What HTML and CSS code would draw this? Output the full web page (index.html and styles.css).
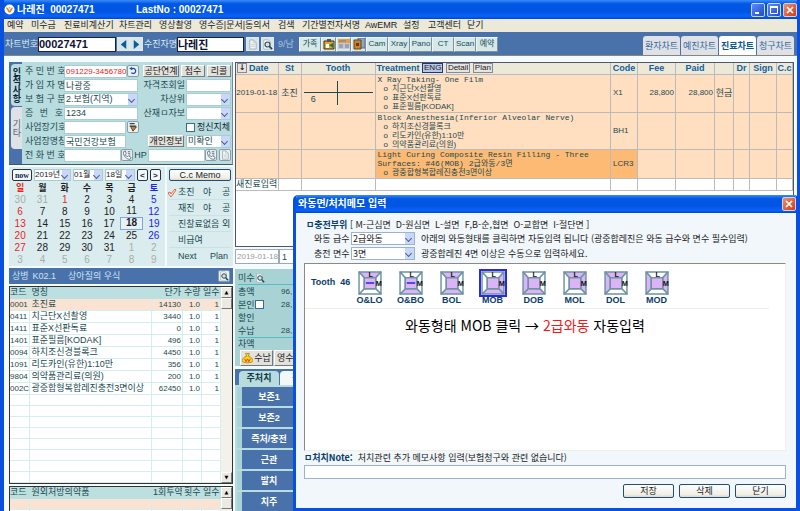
FILE: index.html
```html
<!DOCTYPE html>
<html lang="ko">
<head>
<meta charset="utf-8">
<title>나레진 00027471</title>
<link rel="stylesheet" href="styles.css">
</head>
<body>
<svg width="0" height="0" class="defs" aria-hidden="true">
  <symbol id="mag" viewBox="0 0 12 12"><path d="M2 1h5l2 2v8H2z" fill="#fff" stroke="#9aa" stroke-width=".8"/><circle cx="6" cy="6" r="2.7" fill="#cfe4ee" stroke="#29484f" stroke-width="1.2"/><path d="M8 8l3 3" stroke="#29484f" stroke-width="1.8"/></symbol>
  <symbol id="phone" viewBox="0 0 12 12"><path d="M2 2l2-1 1 3-1 1c0 2 2 3 3 3l1-1 3 2-1 2C6 12 1 7 2 2z" fill="#fff" stroke="#456" stroke-width=".9"/><path d="M7 2h3M7 4h3M8 6h2" stroke="#567"/></symbol>
  <symbol id="page" viewBox="0 0 12 12"><path d="M3 1h4l3 3v7H3z" fill="#eef3f6" stroke="#a4afb5"/><path d="M7 1v3h3M4.500 6h4M4.500 8h4" stroke="#b5bfc4" fill="none" stroke-width=".7"/></symbol>
</svg>
<div class="window">
  <header class="titlebar">
    <svg class="logo" viewBox="0 0 12 12"><circle cx="6" cy="6" r="5.500" fill="#fff"/><path d="M2.500 4.500c2 0 2 4 3.500 4s1.500-4 3.500-4" fill="none" stroke="#f08a24" stroke-width="2"/><circle cx="6" cy="4" r="1" fill="#f5b540"/></svg>
    <h1>나레진&nbsp; 00027471</h1>
    <span class="last">LastNo : 00027471</span>
    <div class="winbtns">
      <button aria-label="최소화"><svg viewBox="0 0 12 12"><path d="M3 9h4" stroke="#fff" stroke-width="2"/></svg></button>
      <button aria-label="최대화"><svg viewBox="0 0 12 12"><path d="M2.500 3v6.500h7V3z" fill="none" stroke="#fff"/><path d="M2 3h8" stroke="#fff" stroke-width="2"/></svg></button>
      <button class="x" aria-label="창 닫기"><svg viewBox="0 0 12 12"><path d="M3 3l6 6M9 3l-6 6" stroke="#fff" stroke-width="1.700"/></svg></button>
    </div>
  </header>
  <nav class="menu">
    <a href="#">예약</a><a href="#">미수금</a><a href="#">진료비계산기</a><a href="#">차트관리</a><a href="#">영상촬영</a><a href="#">영수증|문서|동의서</a><a href="#">검색</a><a href="#">기간별전자서명</a><a href="#">AwEMR</a><a href="#">설정</a><a href="#">고객센터</a><a href="#">닫기</a>
  </nav>
  <div class="toolbar">
    <label for="chart">차트번호</label><input id="chart" class="no" value="00027471">
    <button class="ic" aria-label="이전"><svg viewBox="0 0 12 12"><path d="M9 1v10L3 6z" fill="#0b5c9c"/></svg></button>
    <button class="ic" aria-label="다음"><svg viewBox="0 0 12 12"><path d="M3 1v10l6-5z" fill="#0b5c9c"/></svg></button>
    <label for="name">수진자명</label><input id="name" class="nm" value="나레진">
    <button class="ic gap" aria-label="문서"><svg><use href="#page"/></svg></button>
    <button class="ic gap" aria-label="찾기"><svg><use href="#mag"/></svg></button>
    <span class="sex">9/남</span>
    <div class="tools">
      <button>가족</button>
      <button class="pic" aria-label="접수증"><svg viewBox="0 0 12 12"><path d="M1 3h10v8H1z" fill="#e9a32c" stroke="#402c10"/><path d="M4 1h4v3H4z" fill="#555"/><path d="M3 6h3v4H3z" fill="#fff"/><path d="M6 7l4-2v5z" fill="#197a48"/></svg></button>
      <button class="pic" aria-label="일정"><svg viewBox="0 0 12 12"><path d="M0 1h12v10H0z" fill="#c3c9d4"/><path d="M0 1h12v4H0z" fill="#e9a03c"/><path d="M1 7h4M7 7h4M1 9h4M7 9h4M1 3h7" stroke="#687eab"/></svg></button>
      <button class="pic" aria-label="기록"><svg viewBox="0 0 12 12"><path d="M5 0h7v10H5z" fill="#8ba6c6" stroke="#54709a"/><path d="M1 2h7v9H1z" fill="#c8842c" stroke="#714510"/><path d="M3 5h3v3H3z" fill="#653b0f"/></svg></button>
      <button>Cam</button><button>Xray</button><button>Pano</button><button>CT</button><button>Scan</button><button>예약</button>
    </div>
    <div class="charttabs"><button>환자차트</button><button>예진차트</button><button class="on">진료차트</button><button>청구차트</button></div>
  </div>

  <main class="content">
    <div class="left">
      <section class="patient">
        <div class="vtabs"><button class="on">인적사항</button><button>기타</button></div>
        <form class="fields">
          <div class="row"><label for="f1">주 민 번 호</label><input id="f1" class="rrn" value="091229-3456780"><button type="button" class="mini" aria-label="새로고침"><svg viewBox="0 0 12 12"><path d="M4 3h2a3 3 0 1 1-2 5" fill="none" stroke="#224a9c" stroke-width="1.500"/><path d="M1.500 3L5 1v4z" fill="#224a9c"/></svg></button>
            <span class="end"><button type="button" class="gray w3">공단연계</button><button type="button" class="gray w1">접수</button><button type="button" class="gray w1">리콜</button></span></div>
          <div class="row"><label for="f2">가 입 자 명</label><input id="f2" class="std" value="나광중"><label class="r" for="f3">자격조회일</label><input id="f3" class="half beige"></div>
          <div class="row"><label for="f4">보 험 구 분</label><span class="sel std"><select id="f4"><option>2.보험(지역)</option></select></span><label class="r" for="f5">차상위</label><span class="sel half"><select id="f5"><option></option></select></span></div>
          <div class="row"><label for="f6">증 번 호</label><input id="f6" class="std" value="1234"><label class="r" for="f7">산재ㅁ자보</label><span class="sel half"><select id="f7"><option></option></select></span></div>
          <div class="row"><label for="f8">사업장기호</label><input id="f8" class="mid"><button type="button" class="mini" aria-label="사업장 찾기"><svg viewBox="0 0 12 12"><path d="M2 2h6M2 5h8" stroke="#345" stroke-width="1.500"/><path d="M3 5l7 1-4 5z" fill="#c98a2a" stroke="#432"/></svg></button><span class="end chk"><input type="checkbox" id="f9"><label for="f9">정신지체</label></span></div>
          <div class="row"><label for="f10">사업장명칭</label><input id="f10" class="mid" value="국민건강보험"><span class="end"><button type="button" class="gray w3">개인정보</button><span class="sel half"><select aria-label="개인정보"><option>미확인</option></select></span></span></div>
          <div class="row"><label for="f11">전 화 번 호</label><input id="f11" class="tel"><button type="button" class="mini" aria-label="전화"><svg><use href="#phone"/></svg></button><label class="hp" for="f12">HP</label><input id="f12" class="tel"><span class="end"><button type="button" class="mini" aria-label="휴대전화"><svg><use href="#phone"/></svg></button><button type="button" class="mini" aria-label="문자"><svg><use href="#page"/></svg></button></span></div>
        </form>
      </section>

      <div class="calrow">
        <section class="cal">
          <div class="calnav"><button class="now">now</button><span class="sel y"><select aria-label="년"><option>2019년</option></select></span><span class="sel m"><select aria-label="월"><option>01월</option></select></span><span class="sel m"><select aria-label="일"><option>18일</option></select></span><button class="nav" aria-label="이전 달">&lt;</button><button class="nav" aria-label="다음 달">&gt;</button></div>
          <table>
            <tr><th class="red">일</th><th>월</th><th>화</th><th>수</th><th>목</th><th>금</th><th class="blue">토</th></tr>
            <tr><td class="out">30</td><td class="out">31</td><td class="red">1</td><td>2</td><td>3</td><td>4</td><td class="blue">5</td></tr>
            <tr><td class="red">6</td><td>7</td><td>8</td><td>9</td><td>10</td><td>11</td><td class="blue">12</td></tr>
            <tr><td class="red">13</td><td>14</td><td>15</td><td>16</td><td>17</td><td class="today">18</td><td class="blue">19</td></tr>
            <tr><td class="red">20</td><td>21</td><td>22</td><td>23</td><td>24</td><td>25</td><td class="blue">26</td></tr>
            <tr><td class="red">27</td><td>28</td><td>29</td><td>30</td><td>31</td><td class="out">1</td><td class="out">2</td></tr>
            <tr><td class="out">3</td><td class="out">4</td><td class="out">5</td><td class="out">6</td><td class="out">7</td><td class="out">8</td><td class="out">9</td></tr>
          </table>
        </section>
        <section class="memo">
          <button class="xp">C.c Memo</button>
          <div class="opts three"><span class="tick"><svg viewBox="0 0 10 10"><path d="M1 5l2-1 1 2 4-5 1 1-5 7z" fill="#fff3ec" stroke="#e0562e" stroke-width=".9"/></svg>초진</span><span>야</span><span>공</span></div>
          <div class="opts three"><span>재진</span><span>야</span><span>공</span></div>
          <div class="opts one"><span>진찰료없음 외</span></div>
          <div class="opts one"><span>비급여</span></div>
          <div class="opts two"><span>Next</span><span>Plan</span></div>
        </section>
      </div>

      <div class="diag"><span>상병</span><span>K02.1</span><span class="dn">상아질의 우식</span><button class="mini" aria-label="상병 찾기"><svg><use href="#mag"/></svg></button></div>

      <div class="listbox">
        <table class="list codes">
          <tr><th>코드</th><th>명칭</th><th>단가</th><th>수량</th><th>일수</th></tr>
          <tr class="hot"><td>0001</td><td>초진료</td><td>14130</td><td>1.0</td><td>1</td></tr>
          <tr><td>0411</td><td>치근단X선촬영</td><td>3440</td><td>1.0</td><td>1</td></tr>
          <tr><td>1411</td><td>표준X선판독료</td><td>0</td><td>1.0</td><td>1</td></tr>
          <tr><td>1401</td><td>표준필름[KODAK]</td><td>496</td><td>1.0</td><td>1</td></tr>
          <tr><td>0094</td><td>하치조신경블록크</td><td>4450</td><td>1.0</td><td>1</td></tr>
          <tr><td>1091</td><td>리도카인(유한)1:10만</td><td>356</td><td>1.0</td><td>1</td></tr>
          <tr><td>9804</td><td>의약품관리료(의원)</td><td>200</td><td>1.0</td><td>1</td></tr>
          <tr><td>002C</td><td>광중합형복합레진충전3면이상</td><td>62450</td><td>1.0</td><td>1</td></tr>
          <tr><td></td><td></td><td></td><td></td><td></td></tr>
          <tr><td></td><td></td><td></td><td></td><td></td></tr>
          <tr><td></td><td></td><td></td><td></td><td></td></tr>
          <tr><td></td><td></td><td></td><td></td><td></td></tr>
          <tr><td></td><td></td><td></td><td></td><td></td></tr>
          <tr><td></td><td></td><td></td><td></td><td></td></tr>
          <tr><td></td><td></td><td></td><td></td><td></td></tr>
          <tr><td></td><td></td><td></td><td></td><td></td></tr>
        </table>
        <div class="scroll"><i>▲</i><b></b><i class="dn">▼</i></div>
      </div>
      <div class="listbox">
        <table class="list drugs">
          <tr><th>코드</th><th>원외처방의약품</th><th>1회투약</th><th>횟수</th><th>일수</th></tr>
          <tr class="hot"><td></td><td></td><td></td><td></td><td></td></tr>
          <tr><td></td><td></td><td></td><td></td><td></td></tr>
        </table>
        <div class="scroll"><i>▲</i><b></b></div>
      </div>
    </div>

    <div class="right">
      <div class="treatbox">
        <table class="treat">
          <colgroup><col class="c1"><col class="c2"><col class="c3"><col><col class="c5"><col class="c6"><col class="c7"><col class="c8"><col class="c9"><col class="c10"><col class="c11"></colgroup>
          <tr><th class="l"><button class="arr" aria-label="정렬">↓</button>Date</th><th>St</th><th>Tooth</th><th class="l">Treatment <button class="on">ENG</button> <button>Detail</button> <button>Plan</button></th><th>Code</th><th>Fee</th><th>Paid</th><th></th><th>Dr</th><th>Sign</th><th>C.c</th></tr>
          <tr class="r1"><td class="date">2019-01-18</td><td>초진</td><td><div class="tooth"><span></span><span></span><span>6</span><span></span></div></td>
            <td class="tx"><p>X Ray Taking- One Film</p><ul><li>치근단X선촬영</li><li>표준X선판독료</li><li>표준필름[KODAK]</li></ul></td>
            <td class="code">X1</td><td class="num">28,800</td><td class="num">28,800</td><td>현금</td><td></td><td></td><td></td></tr>
          <tr class="r2"><td></td><td></td><td></td><td class="tx"><p>Block Anesthesia(Inferior Alveolar Nerve)</p><ul><li>하치조신경블록크</li><li>리도카인(유한)1:10만</li><li>의약품관리료(의원)</li></ul></td><td class="code">BH1</td><td></td><td></td><td></td><td></td><td></td><td></td></tr>
          <tr class="r3"><td></td><td></td><td></td><td class="tx hot"><p>Light Curing Composite Resin Filling - Three Surfaces: #46(MOB) <span>2급와동/3면</span></p><ul><li>광중합형복합레진충전3면이상</li></ul></td><td class="code hot">LCR3</td><td></td><td></td><td></td><td></td><td></td><td></td></tr>
          <tr class="new"><td class="nowrap">새진료입력</td><td></td><td></td><td></td><td></td><td></td><td></td><td></td><td></td><td></td><td></td></tr>
        </table>
      </div>
      <div class="entry"><input aria-label="진료일" class="d" value="2019-01-18"><input aria-label="내용" class="t" value="1"></div>
      <section class="pay">
        <div class="prow top"><span>미수</span><svg><use href="#mag"/></svg></div>
        <div class="prow"><span>총액</span><b>96,</b></div>
        <div class="prow"><label for="own">본인</label><input type="checkbox" id="own"><b>28,</b></div>
        <div class="prow"><span>할인</span></div>
        <div class="prow"><span>수납</span><b>28,</b></div>
        <div class="prow diff"><span>차액</span></div>
        <div class="pbtns"><button class="gray"><svg viewBox="0 0 12 12"><path d="M4 1h4l-1 3c3 1 5 3 5 5 0 3-12 3-12 0 0-2 2-4 5-5z" fill="#fbd41c" stroke="#a57608" stroke-width=".8"/><path d="M3 7l1.500 3L6 7l1.500 3L9 7" fill="none" stroke="#d83a20"/></svg>수납</button><button class="gray next">영수</button></div>
      </section>
      <section class="actions">
        <div class="atabs"><button class="on">주처치</button><button>검사</button></div>
        <div class="alist"><button>보존1</button><button>보존2</button><button>즉처/충전</button><button>근관</button><button>발치</button><button>치주</button></div>
      </section>
    </div>
  </main>

  <section class="dialog" role="dialog" aria-labelledby="dlgt">
    <header><h2 id="dlgt">와동면/처치메모 입력</h2><button class="x" aria-label="대화상자 닫기"><svg viewBox="0 0 12 12"><path d="M3 3l6 6M9 3l-6 6" stroke="#fff" stroke-width="1.700"/></svg></button></header>
    <div class="dbody">
      <p class="legend"><strong>ㅁ충전부위</strong> [ M-근심면 &nbsp;D-원심면 &nbsp;L-설면 &nbsp;F,B-순,협면 &nbsp;O-교합면 &nbsp;I-절단면 ]</p>
      <div class="frow"><label for="g1">와동 급수</label><span class="sel"><select id="g1"><option>2급와동</option></select></span><span>아래의 와동형태를 클릭하면 자동입력 됩니다 (광중합레진은 와동 급수와 면수 필수입력)</span></div>
      <div class="frow"><label for="g2">충전 면수</label><span class="sel"><select id="g2"><option>3면</option></select></span><span>광중합레진 4면 이상은 수동으로 입력하세요.</span></div>
      <div class="canvas">
        <div class="shapes">
          <strong>Tooth&nbsp; 46</strong>
          <button class="s t c ln"><svg viewBox="0 0 23 23"><use href="#tooth"/></svg>O&amp;LO</button>
          <button class="s b c ln"><svg viewBox="0 0 23 23"><use href="#tooth"/></svg>O&amp;BO</button>
          <button class="s t b c"><svg viewBox="0 0 23 23"><use href="#tooth"/></svg>BOL</button>
          <button class="s r b c sel-on"><svg viewBox="0 0 23 23"><use href="#tooth"/></svg>MOB</button>
          <button class="s l b c"><svg viewBox="0 0 23 23"><use href="#tooth"/></svg>DOB</button>
          <button class="s t r c"><svg viewBox="0 0 23 23"><use href="#tooth"/></svg>MOL</button>
          <button class="s t l c"><svg viewBox="0 0 23 23"><use href="#tooth"/></svg>DOL</button>
          <button class="s l r c"><svg viewBox="0 0 23 23"><use href="#tooth"/></svg>MOD</button>
        </div>
        <p class="hint">와동형태 MOB 클릭 → <em>2급와동</em> 자동입력</p>
      </div>
      <label class="note" for="note"><strong>ㅁ처치Note:</strong> &nbsp;처치관련 추가 메모사항 입력(보험청구와 관련 없습니다)</label>
      <input id="note" class="noteinput">
      <div class="dbtns"><button class="xp">저장</button><button class="xp">삭제</button><button class="xp">닫기</button></div>
    </div>
  </section>
</div>
<svg width="0" height="0" class="defs" aria-hidden="true">
  <symbol id="tooth" viewBox="0 0 23 23">
    <g stroke="#6f93a3" stroke-width="1.400" stroke-linejoin="round">
      <path class="pt" d="M1 1h21l-5 5.500H6z"/>
      <path class="pr" d="M22 1v21l-5-5V6.500z"/>
      <path class="pb" d="M1 22h21l-5-5H6z"/>
      <path class="pl" d="M1 1v21l5-5V6.500z"/>
      <path class="pc" d="M6 6.500h11V17H6z"/>
    </g>
    <path class="pn" d="M7.500 11.500h8" stroke-width="1.400"/>
    <text x="10" y="6" class="tl">L</text><text x="17" y="14" class="tl">M</text>
  </symbol>
</svg>
</body>
</html>
```
FILE: styles.css
```css
* { box-sizing: border-box; }
:root { --ink: #1c4a50; --blue: #4a72aa; --teal: #b9dcdf; }
body, h1, h2, p, ul { margin: 0; padding: 0; }
body { font: 9px/12px "Liberation Sans", "Noto Sans CJK KR", sans-serif; color: var(--ink); overflow: hidden; background: #fff; }
button, input, select { font: inherit; color: inherit; margin: 0; padding: 0; min-width: 0; }
button { display: inline-flex; align-items: center; justify-content: center; white-space: nowrap; }
a { color: inherit; text-decoration: none; }
.defs { position: absolute; }
table { border-collapse: collapse; }
.window { position: relative; height: 100vh; display: flex; flex-direction: column; border-left: 4px solid #0a50e0; border-right: 3px solid #0a50e0; background: #0a50e0; }

.titlebar, .dialog > header { background: linear-gradient(#3d8bf5, #0058e6 20%, #0055e0 60%, #0a62fb 85%, #0048c8); color: #fff; display: flex; align-items: center; }
.titlebar { height: 19px; flex: none; }
.logo { width: 11px; height: 11px; margin: 0 2px 0 0; }
h1, .last { font: bold 10px/12px "Liberation Sans", "Noto Sans CJK KR", sans-serif; }
h1 { width: 119px; white-space: nowrap; }
.winbtns { margin-left: auto; display: flex; gap: 2px; }
.winbtns button, .x { width: 14px; height: 14px; border: 1px solid #c6d6fa; border-radius: 2px; background: linear-gradient(135deg, #5e8cf4, #1d48cf); }
.winbtns svg, .x svg { width: 12px; height: 12px; flex: none; }
.winbtns .x, .x { background: linear-gradient(135deg, #f08e6c, #d23c12); }

.menu { flex: none; height: 13px; background: #ece9d8; color: #222; display: grid; grid-template-columns: 24px 33px 55px 40px 40px 79px 24px 63px 38px 25px 39px 1fr; padding-left: 3px; white-space: nowrap; }
.toolbar { flex: none; height: 24px; background: var(--blue); border-bottom: 1px solid #8d8478; display: flex; align-items: center; padding: 1px 3px 0 1px; }
.toolbar > label, .sex { color: #dcebf6; width: 33px; white-space: nowrap; }
.toolbar > input { height: 15px; border: 1px solid #13263c; background: #fff; font: bold 11px/13px "Liberation Sans", "Noto Sans CJK KR", sans-serif; color: #113; }
.no { width: 78px; margin-right: 1px; }
.nm { width: 67px; }
.ic { width: 13px; height: 14px; border: 1px solid #dfe8ea; background: #d8e6ea; }
.ic svg { width: 11px; height: 11px; flex: none; }
.ic + label { margin-left: 1px; }
.ic.gap { margin-left: 2px; }
.toolbar .sex { padding-left: 4px; width: 25px; color: #a9c1dc; }
.tools { display: flex; }
.tools button { width: 22px; height: 15px; border: 1px solid; border-color: #eef7f7 #7f9097 #7f9097 #eef7f7; background: #d5e8ea; font-size: 8px; }
.tools .pic { width: 15px; }
.tools svg { width: 12px; height: 12px; flex: none; }
.charttabs { margin-left: auto; display: flex; gap: 1px; align-self: flex-end; }
.charttabs button { width: 37px; height: 19px; border: 0; border-radius: 3px 3px 0 0; background: #dfe1e6; color: #35699c; }
.charttabs .on { background: #fff; font-weight: bold; color: #0b5796; }

.content { flex: 1; min-height: 0; background: #f4fbfc; display: flex; gap: 2px; padding: 6px 3px 0 5px; overflow: hidden; }
.left { width: 224px; flex: none; display: flex; flex-direction: column; gap: 2px; }

.patient { display: flex; background: var(--teal); border-bottom: 1px solid #456; border-right: 1px solid #789; }
.vtabs { width: 13px; background: var(--blue); padding: 2px 0 0 2px; display: flex; flex-direction: column; gap: 1px; flex: none; }
.vtabs button { border: 0; height: 42px; border-radius: 4px 0 0 4px; background: #dfe1e6; writing-mode: vertical-rl; text-orientation: upright; color: #567; }
.vtabs .on { background: var(--teal); color: #123; font-weight: bold; }
.fields { flex: 1; display: grid; grid-auto-rows: 14px; padding: 2px 1px 2px 3px; }
.row { display: flex; align-items: center; }
.row > label:first-child { width: 39px; padding-right: 1px; text-align: justify; text-align-last: justify; white-space: nowrap; flex: none; font-size: 8px; }
.row > label:first-child { font-size: 9px; }
.row input:not([type]) , .sel { height: 13px; background: #fff; border: 1px solid #a7cdd3; flex: none; padding-left: 1px; }
.row .rrn { width: 63px; background: #f0eee0; color: #f02020; font-size: 8px; padding: 0; }
.row .std { width: 74px; }
.row .half { width: 45px; }
.row .mid { width: 62px; margin-right: 1px; }
.row .tel { width: 57px; }
.row .beige { background: #edebdd; }
.row .r { flex: 1; text-align: right; padding-right: 1px; white-space: nowrap; }
.hp { width: 15px; text-align: center; }
.end { margin-left: auto; display: flex; gap: 2px; align-items: center; }
.chk { width: 45px; color: #123; white-space: nowrap; }
input[type=checkbox] { appearance: none; width: 9px; height: 9px; border: 1px solid #3c6a8c; background: #fff; flex: none; }
.gray { height: 12px; border: 1px solid; border-color: #fff #76797c #76797c #fff; background: #e2e1dc; color: #222; }
.w3 { width: 36px; }
.w1 { width: 24px; }
.mini { width: 12px; height: 12px; border: 1px solid #8b9ca5; border-radius: 2px; background: #e9f1f3; flex: none; }
.mini svg { width: 10px; height: 10px; flex: none; }
.sel { position: relative; display: inline-block; }
.sel select { appearance: none; border: 0; background: transparent; width: 100%; height: 100%; display: block; line-height: 11px; }
.sel::after { content: ""; position: absolute; right: 0; top: 0; bottom: 0; width: 9px; background: #c8d7fb; pointer-events: none; }
.sel::before { content: ""; position: absolute; z-index: 1; right: 3px; top: 3px; width: 4px; height: 4px; border: solid #4d6185; border-width: 0 1px 1px 0; transform: rotate(45deg); pointer-events: none; }

.calrow { display: flex; gap: 2px; }
.cal { flex: 1; background: #daecee; padding: 2px 0 0; }
.memo { width: 66px; background: #daecee; padding: 2px; }
.calnav { display: flex; gap: 2px; padding-left: 3px; }
.calnav .sel { height: 12px; color: #222; padding: 0; }
.calnav select { font-size: 8px; line-height: 10px; }
.sel.y { width: 37px; }
.sel.m { width: 30px; }
.calnav .sel::after { width: 8px; }
.now, .nav { height: 12px; width: 20px; border: 1px solid #234; border-radius: 2px; background: #f4f7f7; font: bold 8px/9px "Liberation Serif", serif; color: #0d2a50; }
.nav { width: 11px; font-family: "Liberation Mono", monospace; }
.cal table { width: 100%; table-layout: fixed; text-align: center; color: #222; }
.cal th, .cal td { padding: 0; height: 12px; font: 10px/11px "Liberation Sans", sans-serif; }
.cal th { font: bold 9px/11px "Noto Sans CJK KR", sans-serif; }
.cal .red { color: #e22; }
.cal .blue { color: #22e; }
.cal .out { color: #aaaca6; }
.cal .today { font-weight: bold; border: 1px solid #7fa8d8; background: #e6f1fa; line-height: 10px; }
.xp { border: 1px solid #1f4e78; border-radius: 2px; background: linear-gradient(#fff, #efeee6 80%, #dcd8c8); color: #222; }
.memo .xp { width: 100%; height: 12px; margin-bottom: 3px; line-height: 10px; }
.opts { display: grid; border-bottom: 1px solid #c4e4e6; height: 16px; align-items: center; padding-left: 9px; white-space: nowrap; position: relative; }
.three { grid-template-columns: 25px 19px 1fr; }
.two { grid-template-columns: 32px 1fr; border: 0; }
.tick svg { position: absolute; left: -2px; top: 4px; width: 10px; height: 10px; }

.diag { background: var(--blue); color: #cfe2f6; height: 16px; flex: none; display: flex; align-items: center; gap: 4px; padding: 0 3px; }
.diag .dn { margin-left: 8px; }
.diag .mini { margin-left: auto; }

.listbox { display: flex; border: 1px solid #333; background: #fff; flex: none; }
.list { flex: 1; table-layout: fixed; width: 100%; }
.codes { height: 195px; }
.list th, .list td { padding: 0 1px; line-height: 11px; height: 11px; font-weight: normal; overflow: hidden; white-space: nowrap; border-right: 1px solid #d5eeee; border-bottom: 1px solid #d5eeee; text-align: right; }
.list td { font-size: 8px; }
.list th { background: #bcdfe0; border-color: #bcdfe0; }
.list .hot td { background: #fae3d2; }
.list tr > :nth-child(1) { width: 19px; text-align: left; padding: 0; }
.list tr > :nth-child(2) { text-align: left; padding-left: 2px; font-size: 9px; }
.list tr > :nth-child(3) { width: 31px; }
.list tr > :nth-child(4), .list tr > :nth-child(5) { width: 19px; }
.scroll { width: 11px; flex: none; background: #f3f1ea; display: flex; flex-direction: column; }
.scroll i, .scroll b { height: 11px; border: 1px solid; border-color: #fff #777 #777 #fff; background: #ece9e0; font: 5px/9px "DejaVu Sans", sans-serif; text-align: center; color: #000; }
.scroll .dn { margin-top: auto; }

.right { flex: 1; min-width: 0; display: flex; flex-direction: column; }
.treatbox { height: 185px; background: #fff; border: 1px solid #556; }
.treat { width: 100%; table-layout: fixed; }
.c1 { width: 42px; } .c2 { width: 23px; } .c3 { width: 74px; } .c5 { width: 27px; } .c6 { width: 38px; } .c7 { width: 39px; } .c8 { width: 19px; } .c9 { width: 16px; } .c10 { width: 27px; } .c11 { width: 16px; }
.treat th, .treat td { border-right: 1px solid #bbb; border-bottom: 1px solid #bbb; padding: 0; text-align: center; overflow: hidden; white-space: nowrap; }
.treat th { background: #ece9d8; height: 11px; color: #1060a0; font: bold 9px/10px "Liberation Sans", sans-serif; }
.treat .l { text-align: left; padding-left: 1px; }
.treat th button { height: 10px; border: 1px solid #889; background: #e6e4e0; color: #222; font: 8px/8px "Liberation Sans", sans-serif; padding: 0 1px; vertical-align: top; }
.treat th .on { background: #b9c6e6; border-color: #237; }
.treat th .arr { width: 10px; margin-right: 2px; font-weight: bold; font-family: "DejaVu Sans", sans-serif; }
.r1 td, .r2 td, .r3 td { background: #ffdfc0; }
.r1 { height: 38px; } .r2 { height: 37px; } .r3 { height: 29px; } .new { height: 12px; }
.treat .tx { text-align: left; vertical-align: top; padding: 0 0 0 2px; white-space: normal; }
.tx p { font-family: "Liberation Mono", "Noto Sans CJK KR", monospace; font-size: 8px; line-height: 9px; }
.tx ul { list-style: none; padding-left: 6px; font-size: 8px; line-height: 9px; }
.tx li::before { content: "o"; padding-right: 4px; }
.treat .hot { background: #fcba74; }
.treat .date, .treat .code, .treat .num { font-size: 8px; }
.treat .code, .treat .new td:first-child { text-align: left; padding-left: 2px; }
.treat .new td { line-height: 11px; }
.treat .new td:first-child { padding-left: 0; }
.treat .num { text-align: right; padding-right: 1px; }
.tooth { display: grid; grid-template-columns: 1fr 1fr; grid-template-rows: 12px 12px; margin: 0 2px; }
.tooth span { line-height: 13px; }
.tooth span:nth-child(-n+2) { border-bottom: 1px solid var(--ink); }
.tooth span:nth-child(odd) { border-right: 1px solid var(--ink); }
.tooth span:nth-child(3) { padding-right: 14px; }

.entry { display: flex; padding: 2px 0 5px; }
.entry input { height: 15px; border: 1px solid #9ab; background: #fff; padding-left: 1px; }
.entry .d { width: 44px; color: #999; font-size: 8px; }
.entry .t { flex: 1; padding-left: 2px; }
.pay { background: #a8d2d4; padding: 3px 0 0 3px; height: 97px; flex: none; }
.prow { display: flex; align-items: center; height: 13px; width: 100%; }
.prow > :first-child { width: 17px; white-space: nowrap; }
.prow svg { width: 10px; height: 10px; }
.prow b { font-weight: normal; width: 15px; margin-left: 26px; font-size: 8px; }
.prow input + b { margin-left: 17px; }
.prow.top { border-bottom: 1px solid #53bfc2; }
.prow.diff { border-top: 1px solid #53bfc2; }
.pbtns { display: flex; gap: 1px; padding-left: 2px; }
.pbtns .gray { width: 33px; height: 16px; }
.pbtns .next { justify-content: flex-start; padding-left: 2px; }
.pbtns svg { width: 11px; height: 12px; flex: none; margin-right: 1px; }
.actions { background: var(--teal); flex: 1; margin-top: 3px; }
.atabs { background: var(--blue); height: 16px; display: flex; gap: 1px; padding: 2px 0 0 4px; }
.atabs button { width: 40px; border: 0; border-radius: 4px 4px 0 0; background: #f2f8f8; }
.atabs .on { background: var(--teal); font-weight: bold; color: #0f3840; }
.alist { display: grid; gap: 2px; padding: 2px 0 0 2px; width: 58px; }
.alist button { height: 19px; border: 0; border-left: 5px solid #a9d3d8; background: var(--blue); color: #fff; font-weight: bold; padding-left: 3px; }

.dialog { position: absolute; left: 289px; right: -2px; top: 195px; bottom: 0; display: flex; flex-direction: column; background: #f1f7fa; border: solid #0a50e0; border-width: 0 3px 3px; border-radius: 5px 5px 0 0; overflow: hidden; color: #222; }
.dialog > header { height: 18px; flex: none; margin: 0 -3px; padding: 0 3px 0 5px; }
h2 { font: bold 10px/14px "Liberation Sans", "Noto Sans CJK KR", sans-serif; }
.dialog .x { margin-left: auto; }
.dbody { flex: 1; padding: 6px 10px 10px 8px; display: flex; flex-direction: column; }
.dialog strong { color: #0c3c6c; }
.legend { padding-left: 2px; }
.frow { display: flex; align-items: center; height: 15px; white-space: nowrap; }
.frow label { width: 47px; padding-left: 10px; }
.frow .sel { width: 64px; margin-right: 6px; border-color: #9ab3d0; }
.legend, .frow, .note { font-family: "Noto Sans CJK KR", sans-serif; }
.canvas { flex: 1; background: #fff; border: 1px solid; border-color: #8d8a84 #f4efe4 #f4efe4 #8d8a84; margin-top: 2px; }
.shapes { display: flex; align-items: flex-start; padding: 6px 0 3px 6px; margin-right: 16px; border-bottom: 1px solid #f0ede4; }
.shapes strong { width: 38px; padding-top: 6px; font: bold 9px/12px "Liberation Sans", sans-serif; white-space: nowrap; }
.s { width: 41px; border: 0; background: none; flex-direction: column; font: bold 9px/9px "Liberation Sans", sans-serif; color: #0c3c6c; }
.s svg { width: 24px; height: 24px; margin: 1px 0; }
.sel-on svg { outline: 2px solid #2a2ae0; }
.t { --t: #dab4f6; }
.r { --r: #dab4f6; }
.b { --b: #dab4f6; }
.l { --l: #dab4f6; }
.c { --c: #dab4f6; }
.ln { --ln: #22e; }
.pt { fill: var(--t, #fff); }
.pr { fill: var(--r, #fff); }
.pb { fill: var(--b, #fff); }
.pl { fill: var(--l, #fff); }
.pc { fill: var(--c, #fff); }
.pn { stroke: var(--ln, none); }
.tl { font: bold 7px "Liberation Sans", sans-serif; fill: #111; }
.hint { text-align: center; font: 14px/20px "Noto Sans CJK KR", sans-serif; color: #000; padding: 6px 40px 0 0; }
.hint em { font-style: normal; color: #f01818; }
.note { line-height: 14px; }
.noteinput { height: 14px; border: 1px solid #9ab3c8; background: #fff; flex: none; }
.dbtns { display: flex; justify-content: flex-end; gap: 5px; margin-top: 5px; }
.dbtns .xp { width: 51px; height: 14px; }
```
